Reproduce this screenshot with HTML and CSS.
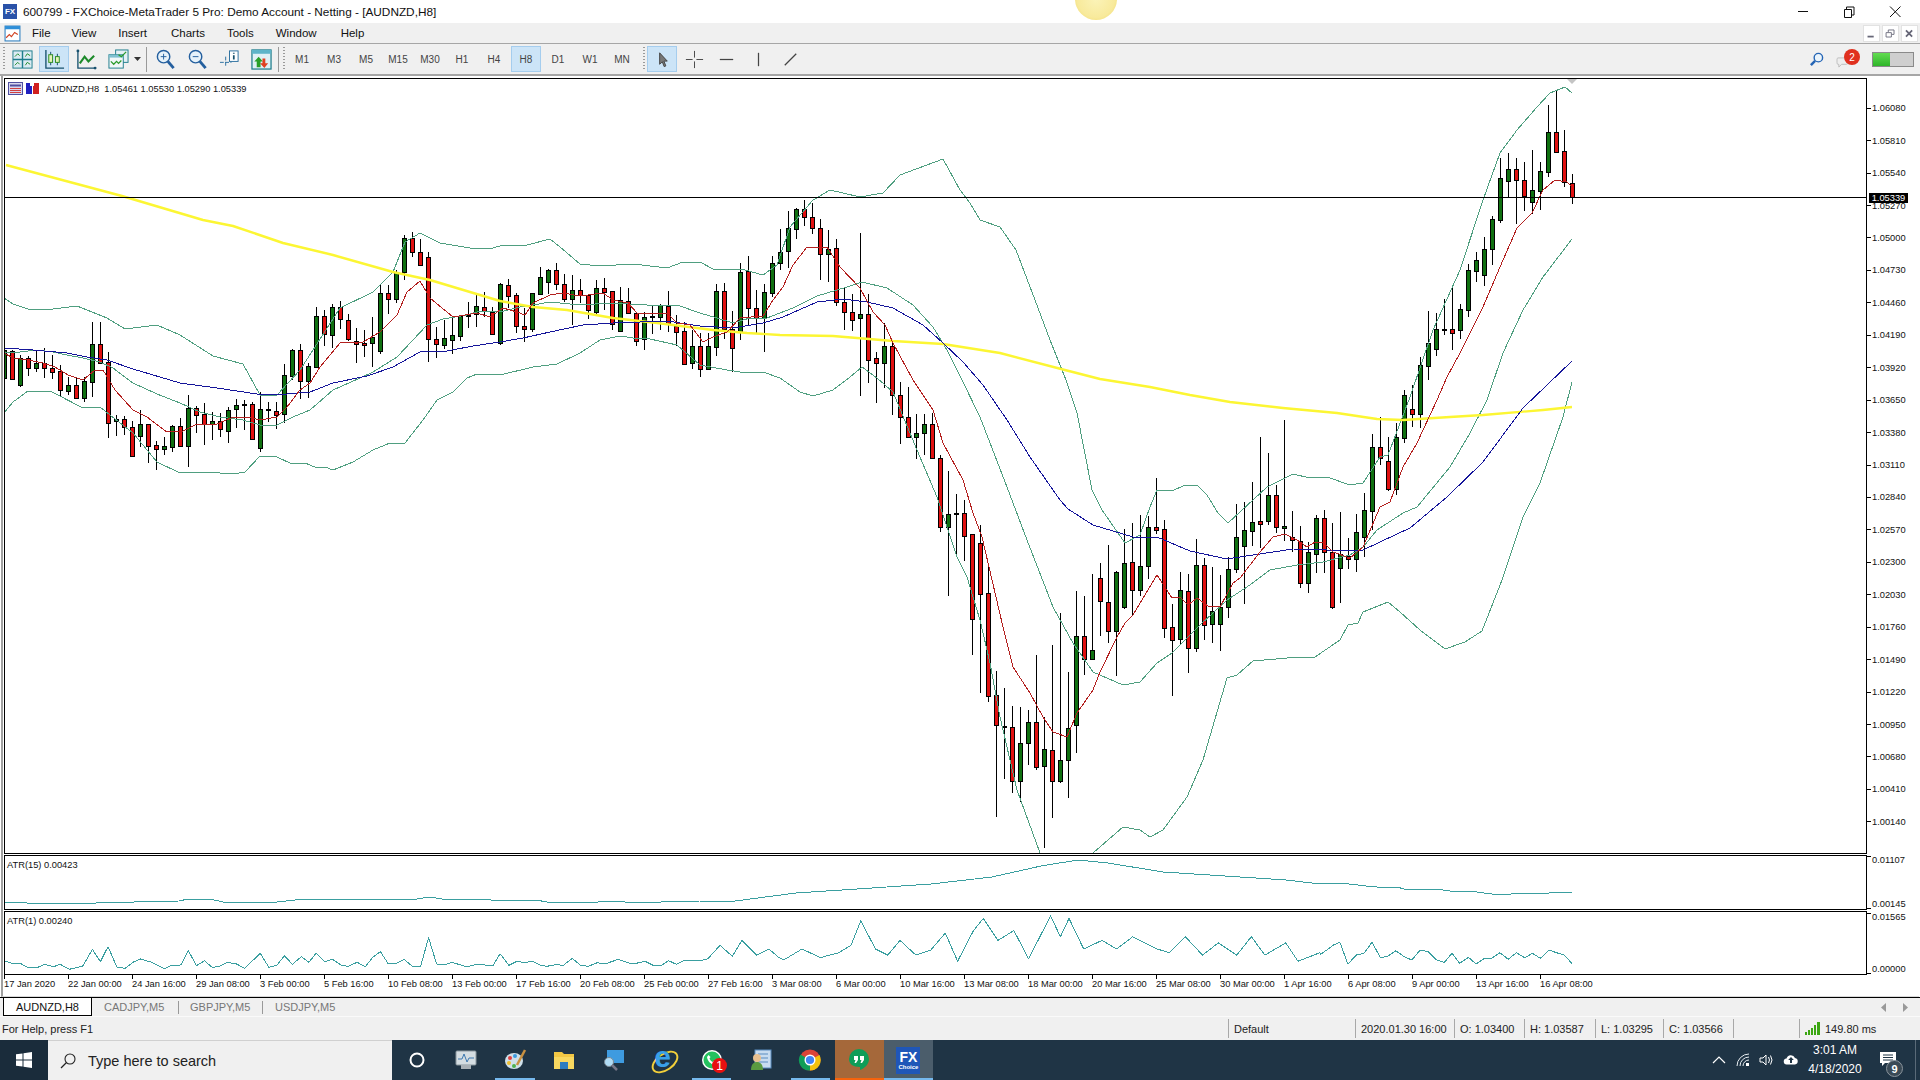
FILE: index.html
```html
<!DOCTYPE html>
<html lang="en">
<head>
<meta charset="utf-8">
<title>FXChoice-MetaTrader 5</title>
<link rel="stylesheet" href="styles.css">
</head>
<body>
<div class="glow"></div>
<div class="app">
  <header class="titlebar">
    <span class="app-badge">FX</span>
    <span class="title-text">600799 - FXChoice-MetaTrader 5 Pro: Demo Account - Netting - [AUDNZD,H8]</span>
    <div class="win-btns">
      <svg class="wb" viewBox="0 0 46 22"><path d="M18 10.5h10" stroke="#111" fill="none"/></svg>
      <svg class="wb" viewBox="0 0 46 22"><path d="M18.5 8.5h7v8h-7zM20.5 8.5v-2.5h7.500v8h-2.500" stroke="#111" fill="none"/></svg>
      <svg class="wb" viewBox="0 0 46 22"><path d="M18 5.500l10.500 10.500M28.500 5.500L18 16" stroke="#111" fill="none"/></svg>
    </div>
  </header>
  <nav class="menubar">
    <svg class="menu-icon" viewBox="0 0 16 16"><rect x="1" y="1" width="14" height="14" fill="#fff" stroke="#2f7fc0"/><rect x="1" y="1" width="14" height="3" fill="#2f8fd8"/><path d="M2 12l3-3 2 2 3-4 3 2" stroke="#d04020" fill="none"/></svg>
    <span class="menu-item">File</span><span class="menu-item m-view">View</span><span class="menu-item">Insert</span><span class="menu-item m-charts">Charts</span><span class="menu-item">Tools</span><span class="menu-item">Window</span><span class="menu-item m-help">Help</span>
    <div class="mdi-btns">
      <span class="mdi"><svg viewBox="0 0 17 17"><path d="M4 12h7" stroke="#667" stroke-width="2"/></svg></span>
      <span class="mdi"><svg viewBox="0 0 17 17"><path d="M3.500 7.500h6v5h-6zM6 7V4.500h6.500v5H10" stroke="#667" fill="none"/></svg></span>
      <span class="mdi"><svg viewBox="0 0 17 17"><path d="M4.500 5l7 7M11.500 5l-7 7" stroke="#667" stroke-width="2"/></svg></span>
    </div>
  </nav>
  <div class="toolbar">
    <i class="grip"></i>
    <span class="tb"><svg viewBox="0 0 22 22"><rect x="1" y="2" width="20" height="18" fill="#dcebf3" stroke="#1e7d8c"/><path d="M11 2v18M1 11h20" stroke="#1e7d8c" stroke-width="1.500"/><path d="M3 8l3-3 2 2M14 8l2-3 3 2M3 17l3-3 2 2M14 17l2-3 3 2" stroke="#1c8a2a" fill="none"/></svg></span>
    <span class="tb on"><svg viewBox="0 0 22 22"><path d="M2 1v19h19" stroke="#17506e" stroke-width="1.400" fill="none"/><path d="M7 3v14M14 5v12" stroke="#17506e"/><rect x="5" y="6" width="4" height="8" fill="#e8f3b8" stroke="#2a8a1e"/><rect x="12" y="8" width="4" height="6" fill="#e8f3b8" stroke="#2a8a1e"/></svg></span>
    <span class="tb"><svg viewBox="0 0 22 22"><path d="M2 1v19h19" stroke="#17506e" stroke-width="1.400" fill="none"/><circle cx="2" cy="2" r="1.500" fill="#17506e"/><circle cx="20" cy="20" r="1.500" fill="#17506e"/><path d="M4 15l5-7 4 5 6-6" stroke="#1c8a2a" stroke-width="2.200" fill="none"/></svg></span>
    <span class="tb"><svg viewBox="0 0 22 22"><rect x="8" y="1" width="13" height="13" fill="#e4f0f5" stroke="#1e7d8c"/><rect x="1" y="6" width="15" height="14" fill="#f2f7f9" stroke="#1e7d8c"/><rect x="1" y="6" width="15" height="3" fill="#7fc0d0"/><path d="M3 13l3 3 3-3 2 2 3-3M11 6l3 2 5-5" stroke="#2a9a2a" fill="none" stroke-width="1.300"/></svg></span>
    <svg class="drop" viewBox="0 0 7 4"><path d="M0 0h7L3.500 4z" fill="#333"/></svg>
    <i class="sep"></i>
    <span class="tb"><svg viewBox="0 0 22 22"><circle cx="9" cy="8" r="6.500" fill="#e6f2fa" stroke="#245f9e" stroke-width="1.500"/><path d="M6 8h6M9 5v6" stroke="#245f9e"/><path d="M13.500 13l6 7" stroke="#245f9e" stroke-width="3"/></svg></span>
    <span class="tb"><svg viewBox="0 0 22 22"><circle cx="9" cy="8" r="6.500" fill="#e6f2fa" stroke="#245f9e" stroke-width="1.500"/><path d="M6 8h6" stroke="#245f9e"/><path d="M13.500 13l6 7" stroke="#245f9e" stroke-width="3"/></svg></span>
    <span class="tb"><svg viewBox="0 0 22 22"><path d="M7 8v11M1 14h12" stroke="#2a6f9e" stroke-dasharray="4 1.500"/><rect x="11" y="2" width="9" height="11" fill="#fff" stroke="#2a6f9e"/><path d="M15.500 4v1M15.500 6.500v4.500" stroke="#17506e" stroke-width="1.800"/></svg></span>
    <span class="tb"><svg viewBox="0 0 22 22"><rect x="1" y="1" width="20" height="20" fill="#dff0f5" stroke="#1e7d8c" stroke-width="1.300"/><rect x="1" y="1" width="20" height="4" fill="#5db4c8"/><path d="M8 8l4.500 5H10v6H6v-6H3.500z" fill="#28a028"/><path d="M15 10v5h3l-4 5-4.500-5H12v-5z" fill="#e04020"/></svg></span>
    <i class="sep sep-near"></i>
    <i class="grip grip-tf"></i>
    <span class="tf">M1</span><span class="tf">M3</span><span class="tf">M5</span><span class="tf">M15</span><span class="tf">M30</span><span class="tf">H1</span><span class="tf">H4</span><span class="tf on">H8</span><span class="tf">D1</span><span class="tf">W1</span><span class="tf">MN</span>
    <i class="grip grip-tools"></i>
    <span class="tb on"><svg viewBox="0 0 22 22"><path d="M8 4v12l2.800-2.500 2 5 1.700-.8-2-5H16z" fill="#777" stroke="#444"/></svg></span>
    <span class="tb"><svg viewBox="0 0 22 22"><path d="M11 2v7M11 13v7M2 11h7M13 11h7" stroke="#444"/></svg></span>
    <span class="tb"><svg viewBox="0 0 22 22"><path d="M4 11h14" stroke="#444" stroke-width="1.300"/></svg></span>
    <span class="tb"><svg viewBox="0 0 22 22"><path d="M11 4v14" stroke="#444" stroke-width="1.300"/></svg></span>
    <span class="tb"><svg viewBox="0 0 22 22"><path d="M5 17L17 5" stroke="#444" stroke-width="1.300"/></svg></span>
    <div class="tool-right">
      <svg class="find" viewBox="0 0 16 16"><circle cx="10" cy="6" r="4.500" fill="#eaf4fb" stroke="#2565b5" stroke-width="1.500"/><path d="M6.500 9.500L2 14" stroke="#2565b5" stroke-width="2.600"/></svg>
      <span class="chat"><svg class="bubble" viewBox="0 0 14 12"><path d="M2 1h9q2 0 2 2v3q0 2-2 2H6l-3 3V8H2Q1 8 1 6V3q0-2 1-2z" fill="#eee" stroke="#bbb"/></svg><b class="chat-badge">2</b></span>
      <span class="meter"><i class="meter-fill"></i></span>
    </div>
  </div>

  <main class="workspace">
    <section class="pane pane-main">
      <div class="plot">
        <svg id="price" class="plot-svg" viewBox="5 79 1861 774"></svg>
        <div class="legend">
          <svg class="legend-ic" viewBox="0 0 32 13"><rect x=".5" y=".5" width="14" height="12" fill="#d8d8f0" stroke="#5050a0"/><path d="M2 3.500h11" stroke="#5050a0" stroke-width="2"/><path d="M2 6.500h11M2 8.500h11M2 10.500h11" stroke="#d04040"/><rect x="18" y="1" width="6" height="11" fill="#2020c0"/><rect x="25" y="1" width="6" height="11" fill="#d02020"/><rect x="22" y="1" width="4" height="3" fill="#fff"/></svg>
          <span>AUDNZD,H8&nbsp;&nbsp;1.05461 1.05530 1.05290 1.05339</span>
        </div>
      </div>
      <div class="axis axis-price">
        <span class="tick">1.06080</span><span class="tick">1.05810</span><span class="tick">1.05540</span><span class="tick">1.05270</span><span class="tick">1.05000</span><span class="tick">1.04730</span><span class="tick">1.04460</span><span class="tick">1.04190</span><span class="tick">1.03920</span><span class="tick">1.03650</span><span class="tick">1.03380</span><span class="tick">1.03110</span><span class="tick">1.02840</span><span class="tick">1.02570</span><span class="tick">1.02300</span><span class="tick">1.02030</span><span class="tick">1.01760</span><span class="tick">1.01490</span><span class="tick">1.01220</span><span class="tick">1.00950</span><span class="tick">1.00680</span><span class="tick">1.00410</span><span class="tick">1.00140</span>
        <span class="last-price">1.05339</span>
      </div>
    </section>
    <section class="pane pane-atr15">
      <div class="plot">
        <svg id="atr15" class="plot-svg" viewBox="5 856 1861 53"></svg>
        <span class="pane-label">ATR(15) 0.00423</span>
      </div>
      <div class="axis axis-sub"><span class="tick t-top">0.01107</span><span class="tick t-bot">0.00145</span></div>
    </section>
    <section class="pane pane-atr1">
      <div class="plot">
        <svg id="atr1" class="plot-svg" viewBox="5 912 1861 62"></svg>
        <span class="pane-label">ATR(1) 0.00240</span>
      </div>
      <div class="axis axis-sub axis-atr1"><span class="tick t-top">0.01565</span><span class="tick t-bot">0.00000</span></div>
    </section>
    <div class="timeaxis">
      <span>17 Jan 2020</span><span>22 Jan 00:00</span><span>24 Jan 16:00</span><span>29 Jan 08:00</span><span>3 Feb 00:00</span><span>5 Feb 16:00</span><span>10 Feb 08:00</span><span>13 Feb 00:00</span><span>17 Feb 16:00</span><span>20 Feb 08:00</span><span>25 Feb 00:00</span><span>27 Feb 16:00</span><span>3 Mar 08:00</span><span>6 Mar 00:00</span><span>10 Mar 16:00</span><span>13 Mar 08:00</span><span>18 Mar 00:00</span><span>20 Mar 16:00</span><span>25 Mar 08:00</span><span>30 Mar 00:00</span><span>1 Apr 16:00</span><span>6 Apr 08:00</span><span>9 Apr 00:00</span><span>13 Apr 16:00</span><span>16 Apr 08:00</span>
    </div>
  </main>

  <div class="tabbar">
    <span class="tab active">AUDNZD,H8</span>
    <span class="tab tab-c">CADJPY,M5</span>
    <span class="tab tab-g">GBPJPY,M5</span>
    <span class="tab tab-u">USDJPY,M5</span>
    <div class="tab-arrows">
      <svg viewBox="0 0 5 9"><path d="M5 0v9L0 4.500z" fill="#999"/></svg>
      <svg viewBox="0 0 5 9"><path d="M0 0v9l5-4.500z" fill="#999"/></svg>
    </div>
  </div>

  <footer class="statusbar">
    <span class="st st-help">For Help, press F1</span>
    <span class="st st-def">Default</span>
    <span class="st st-date">2020.01.30 16:00</span>
    <span class="st st-o">O: 1.03400</span>
    <span class="st st-h">H: 1.03587</span>
    <span class="st st-l">L: 1.03295</span>
    <span class="st st-c">C: 1.03566</span>
    <span class="st st-e"></span>
    <span class="st st-ping"><svg class="signal" viewBox="0 0 15 13"><path d="M0 10h2v3H0zM3 8h2v5H3zM6 6h2v7H6zM9 3h2v10H9zM12 0h3v13h-3z" fill="#3ca612"/></svg>149.80 ms</span>
  </footer>

  <div class="taskbar">
    <span class="start"><svg class="winlogo" viewBox="0 0 16 16"><path d="M0 2.300L6.500 1.400V7.500H0zM7.500 1.200L16 0V7.500H7.500zM0 8.500H6.500V14.600L0 13.700zM7.500 8.500H16V16L7.500 14.800z" fill="#fff"/></svg></span>
    <label class="search"><svg class="search-ic" viewBox="0 0 16 16"><circle cx="10" cy="6" r="5" fill="none" stroke="#222" stroke-width="1.100"/><path d="M6.500 9.500L1 15" stroke="#222" stroke-width="1.200"/></svg><span>Type here to search</span></label>
    <span class="tk"><svg viewBox="0 0 24 24"><circle cx="12" cy="12" r="6.500" fill="none" stroke="#fff" stroke-width="2"/></svg></span>
    <span class="tk"><svg viewBox="0 0 24 24"><rect x="2" y="3" width="20" height="14" rx="1" fill="#d4dde2" stroke="#8a969e"/><path d="M4 11h4l2-5 3 8 2-4h5" stroke="#3c78b0" fill="none"/><rect x="7" y="17" width="10" height="4" fill="#a8b0b6"/></svg></span>
    <span class="tk tk-run"><svg viewBox="0 0 24 24"><ellipse cx="11" cy="13" rx="9" ry="8" fill="#cfe0ea"/><circle cx="7" cy="10" r="2" fill="#e04040"/><circle cx="12" cy="8" r="2" fill="#3c9ae0"/><circle cx="6" cy="15" r="2" fill="#f0c030"/><circle cx="11" cy="18" r="2" fill="#50b050"/><path d="M14 17L22 2" stroke="#c89040" stroke-width="2.500"/></svg></span>
    <span class="tk"><svg viewBox="0 0 24 24"><path d="M2 4h8l2 2h10v15H2z" fill="#f2c744"/><rect x="2" y="9" width="20" height="12" fill="#f8d860"/><rect x="8" y="14" width="8" height="7" fill="#2d7dc0"/></svg></span>
    <span class="tk"><svg viewBox="0 0 24 24"><rect x="6" y="2" width="17" height="13" fill="#3e9be0"/><circle cx="8" cy="14" r="4.500" fill="#b0dcf5" stroke="#7c8a94"/><path d="M11 17l5 5" stroke="#778" stroke-width="2.500"/></svg></span>
    <span class="tk tk-ie"><span class="ie">e</span></span>
    <span class="tk tk-run"><svg viewBox="0 0 24 24"><circle cx="12" cy="12" r="10" fill="#fff"/><circle cx="12" cy="12" r="8.500" fill="#25c15f"/><path d="M8.500 7l-1.500 2c.5 4 3.500 7 7.500 8l2-2-2.500-2-1.500 1c-1.500-1-2.500-2-3-3.500l1-1.500z" fill="#fff"/></svg><b class="wa-badge">1</b></span>
    <span class="tk"><svg viewBox="0 0 24 24"><rect x="6" y="2" width="16" height="18" fill="#c8dcf0" stroke="#5a8cc0"/><path d="M9 6h10M9 10h10M9 14h10" stroke="#5a8cc0"/><circle cx="8" cy="10" r="4" fill="#e8c090"/><path d="M2 22c0-6 3-8 6-8s6 2 6 8z" fill="#5a9a40"/></svg></span>
    <span class="tk tk-run"><svg viewBox="0 0 24 24"><circle cx="12" cy="12" r="10.500" fill="#db4437"/><path d="M12 12L21.500 7A10.500 10.500 0 0 1 12 22.500z" fill="#f4c20d"/><path d="M12 12v10.500A10.500 10.500 0 0 1 2.500 6.500z" fill="#0f9d58"/><circle cx="12" cy="12" r="4.800" fill="#4285f4" stroke="#fff" stroke-width="1.400"/></svg></span>
    <span class="tk tk-hang"><svg viewBox="0 0 24 24"><path d="M12 1a10 10 0 0 1 10 10c0 5-4 9-9 11v-3C6 19 2 16 2 11A10 10 0 0 1 12 1z" fill="#0f9d58"/><path d="M7 8h4v4l-2 3H7.500l1-3H7zM13 8h4v4l-2 3h-1.500l1-3H13z" fill="#fff"/></svg></span>
    <span class="tk tk-fx"><span class="fx-logo"><b>FX</b><small>Choice</small></span></span>
    <div class="tray">
      <span class="tr"><svg viewBox="0 0 16 16"><path d="M2 11l6-6 6 6" stroke="#fff" fill="none" stroke-width="1.200"/></svg></span>
      <span class="tr"><svg viewBox="0 0 16 16"><path d="M2 14A12 12 0 0 1 14 2M5 14a9 9 0 0 1 9-9M8 14a6 6 0 0 1 6-6" stroke="#e8eef2" fill="none"/><rect x="11" y="11" width="3" height="3" fill="#fff"/></svg></span>
      <span class="tr"><svg viewBox="0 0 16 16"><path d="M1 6h3l3-3v10l-3-3H1zM9.500 5q2 3 0 6M11.500 3.500q3 4.500 0 9" stroke="#fff" fill="none"/></svg></span>
      <span class="tr"><svg viewBox="0 0 16 16"><path d="M4 12.500a3 3 0 0 1-.500-6 4.500 4.500 0 0 1 8.500-.500 3.300 3.300 0 0 1 0 6.500z" fill="#fff"/><path d="M8 5l-2.800 3H7v3h2V8h1.800z" fill="#1f3445"/></svg></span>
      <span class="clock"><span>3:01 AM</span><span>4/18/2020</span></span>
      <span class="note"><svg viewBox="0 0 16 16"><path d="M0 0h16v11H5l-3 3v-3H0z" fill="#fff"/><path d="M3 3h10M3 5.500h10M3 8h10" stroke="#1f3445"/></svg><b class="note-badge">9</b></span>
      <i class="show-desk"></i>
    </div>
  </div>
</div>
<script src="chart.js"></script>
</body>
</html>
```
FILE: styles.css
```css
* { box-sizing: border-box; }
html, body { margin: 0; padding: 0; }
body {
  width: 1920px; height: 1080px; overflow: hidden; background: #fff; color: #111;
  font-family: "Liberation Sans", Arial, sans-serif; font-size: 11.500px; position: relative;
}
svg { display: block; }
.glow {
  position: absolute; left: 1075px; top: -22px; width: 42px; height: 42px; border-radius: 50%; z-index: 5;
  background: radial-gradient(circle, #fbf3b8 0%, #f8ea9c 62%, #f3e07f 80%, #fdf7d5 100%);
}
.app { display: flex; flex-direction: column; width: 1920px; height: 1080px; }

/* title + menu */
.titlebar { height: 23px; display: flex; align-items: center; background: #fff; padding-left: 3px; }
.app-badge {
  width: 14px; height: 15px; background: #2a52a8; color: #fff; font: bold 8px "Liberation Sans", sans-serif;
  display: flex; align-items: center; justify-content: center; margin-right: 6px;
}
.title-text { font-size: 11.800px; }
.win-btns { margin-left: auto; display: flex; margin-right: 2px; height: 22px; }
.wb { width: 46px; height: 22px; }
.menubar {
  height: 21px; background: #f0f0f0; border-bottom: 1px solid #a6a6a6; display: flex; align-items: center; gap: 22px;
  padding-left: 32px; position: relative; font-size: 11.500px;
}
.m-view { margin-left: -1px; }
.m-charts { margin-left: 2px; }
.m-help { margin-left: 2px; }
.menu-icon { position: absolute; left: 4px; top: 2px; width: 17px; height: 17px; }
.mdi-btns { margin-left: auto; display: flex; gap: 2px; padding: 2px 2px 0 0; height: 20px; }
.mdi { width: 17px; height: 17px; background: #fff; border: 1px solid #e2e2e2; }
.mdi svg { width: 15px; height: 15px; }

/* toolbar */
.toolbar {
  height: 32px; background: #f0f0f0; border-bottom: 2px solid #a6a6a6; display: flex; align-items: center; padding-left: 2px;
  font-size: 10px; color: #444;
}
.grip {
  width: 4px; height: 24px; flex: none;
  background: repeating-linear-gradient(to bottom, #9a9a9a 0 1px, transparent 1px 3px);
  background-size: 2px 100%; background-repeat: no-repeat; background-position: center;
}
.grip-tf { margin-left: 1px; }
.grip-tools { margin-left: 4px; }
.tb {
  width: 30px; height: 26px; margin: 0 1px; border: 1px solid transparent; display: flex; align-items: center; justify-content: center; flex: none;
}
.tb svg { width: 21px; height: 21px; }
.tb.on, .tf.on { background: #cce4f7; border-color: #a5cdee; }
.drop { width: 7px; height: 4px; margin: 0; flex: none; }
.sep { width: 1px; height: 25px; background: #9a9a9a; margin: 0 2px 0 5px; flex: none; }
.sep-near { margin: 0 2px 0 1px; }
.tf {
  width: 30px; height: 26px; margin: 0 1px; border: 1px solid transparent; display: flex; align-items: center; justify-content: center; flex: none;
}
.tool-right { margin-left: auto; display: flex; align-items: center; padding-right: 6px; }
.find { width: 15px; height: 15px; margin-right: 12px; }
.chat { position: relative; width: 26px; height: 20px; margin-right: 10px; }
.bubble { position: absolute; left: 0; top: 8px; width: 13px; height: 11px; }
.chat-badge {
  position: absolute; left: 8px; top: 0; width: 16px; height: 16px; border-radius: 50%; background: #e0301e; color: #fff;
  font-size: 10px; font-weight: normal; display: flex; align-items: center; justify-content: center;
}
.meter { width: 42px; height: 15px; background: #cfcfcf; border: 1px solid #8a8a8a; display: block; }
.meter-fill { display: block; width: 17px; height: 100%; background: linear-gradient(to bottom, #62dc50, #2fb52a); }

/* charts */
.workspace { height: 921px; padding: 2px 0 1px 1px; margin-left: 1px; border-left: 2px solid #a0a0a0; border-bottom: 1px solid #d8d8d8; background: #fff; display: flex; flex-direction: column; width: 1918px; }
.pane { display: flex; flex: none; }
.pane + .pane { margin-top: 1px; }
.pane-main { height: 776px; }
.pane-atr15 { height: 55px; }
.pane-atr1 { height: 64px; }
.plot { border: 1px solid #000; width: 1863px; position: relative; flex: none; background: #fff; overflow: hidden; }
.plot-svg { width: 1861px; height: 100%; }
.ln { fill: none; stroke-width: 1; stroke-linejoin: round; shape-rendering: crispEdges; }
.ln-band { stroke: #4f9f80; }
.ln-red { stroke: #b3201f; }
.ln-blue { stroke: #15159a; }
.ln-yellow { stroke: #fcf633; stroke-width: 2.400; shape-rendering: auto; }
.ln-atr { stroke: #3a9fa0; }
.price-line { stroke: #000; stroke-width: 1; }
.c-wick { stroke: #000; stroke-width: 1; shape-rendering: crispEdges; }
.c-g { fill: #0f7010; stroke: #000; stroke-width: 1; shape-rendering: crispEdges; }
.c-r { fill: #e01010; stroke: #000; stroke-width: 1; shape-rendering: crispEdges; }
.mark { fill: #c4c4c4; }
.legend { position: absolute; left: 3px; top: 3px; display: flex; align-items: center; gap: 6px; font-size: 9.300px; }
.legend-ic { width: 32px; height: 13px; }
.pane-label { position: absolute; left: 2px; top: 4px; font-size: 9.300px; }
.axis { font-size: 9.300px; flex: 1; position: relative; display: flex; flex-direction: column; color: #111; }
.axis-price { padding-top: 14px; }
.axis-price .tick { height: 32.450px; }
.tick { display: flex; align-items: center; gap: 1px; line-height: 10px; }
.tick::before { content: ""; width: 4px; height: 1px; background: #000; flex: none; }
.axis-sub { justify-content: space-between; padding-bottom: 1px; }
.axis-sub .t-top::before { align-self: flex-start; margin-top: 1px; }
.axis-sub .t-bot::before { align-self: flex-end; }
.axis-atr1 { padding-top: 1px; padding-bottom: 1px; }
.last-price { position: absolute; left: 2px; top: 115px; width: 39px; height: 10px; background: #000; color: #fff; line-height: 10px; text-align: center; }

/* time axis */
.timeaxis { display: flex; height: 20px; flex: none; font-size: 9.300px; line-height: 17px; padding-top: 1px; }
.timeaxis span { width: 64px; flex: none; position: relative; white-space: nowrap; }
.timeaxis span::before { content: ""; position: absolute; left: 0; top: -1px; width: 1px; height: 4px; background: #000; }

/* tabs */
.tabbar { height: 20px; background: #f0f0f0; border-top: 1px solid #000; border-bottom: 1px solid #fafafa; display: flex; align-items: stretch; color: #777; font-size: 11px; position: relative; }
.tab { display: flex; align-items: center; flex: none; }
.tab.active { margin-left: 3px; width: 89px; background: #fff; color: #111; border: 1px solid #000; border-top: none; justify-content: center; }
.tab-c { margin-left: 12px; width: 74px; }
.tab-g { margin-left: 12px; width: 72px; }
.tab-u { margin-left: 13px; }
.tab-c::after, .tab-g::after { content: ""; position: absolute; width: 1px; height: 13px; background: #999; top: 3px; }
.tab-c::after { left: 178px; }
.tab-g::after { left: 262px; }
.tab-arrows { margin-left: auto; display: flex; gap: 17px; align-items: center; padding-right: 12px; }
.tab-arrows svg { width: 5px; height: 9px; }

/* status */
.statusbar { height: 23px; background: #f0f0f0; display: flex; align-items: center; font-size: 11px; color: #222; flex: none; }
.st { height: 19px; display: flex; align-items: center; padding-left: 5px; border-left: 1px solid #a8a8a8; flex: none; white-space: nowrap; }
.st-help { width: 1228px; border-left: none; padding-left: 2px; }
.st-def { width: 127px; }
.st-date { width: 99px; }
.st-o { width: 70px; }
.st-h { width: 71px; }
.st-l { width: 68px; }
.st-c { width: 70px; }
.st-e { width: 66px; }
.st-ping { width: 121px; }
.signal { width: 15px; height: 13px; margin-right: 5px; }

/* taskbar */
.taskbar { height: 40px; background: #1f3445; display: flex; align-items: stretch; flex: none; color: #fff; }
.start { width: 48px; background: #1a2c3b; display: flex; align-items: center; justify-content: center; flex: none; }
.winlogo { width: 16px; height: 16px; }
.search { width: 344px; background: #f0f0f0; color: #222; display: flex; align-items: center; font-size: 14.500px; border-top: 1px solid #d0d0d0; flex: none; }
.search-ic { width: 16px; height: 16px; margin: 0 12px; }
.tk { width: 49.200px; display: flex; align-items: center; justify-content: center; position: relative; flex: none; }
.tk > svg { width: 24px; height: 24px; }
.tk-run::after, .tk-hang::after, .tk-fx::after { content: ""; position: absolute; left: 5px; right: 5px; bottom: 0; height: 2px; background: #76b9ed; }
.tk-hang { background: #a5683a; }
.tk-hang::after { left: 0; right: 0; background: #f7630c; }
.tk-fx { background: #4b5d6b; }
.tk-fx::after { left: 0; right: 0; }
.ie { font: bold 30px "Liberation Sans", sans-serif; color: #3aa0e8; line-height: 24px; position: relative; margin-top: -6px; }
.tk-ie::before {
  content: ""; position: absolute; left: 12px; top: 13px; width: 26px; height: 14px; border: 2px solid #f2cf3a; border-radius: 50%; transform: rotate(-35deg);
}
.wa-badge { position: absolute; left: 25px; top: 18px; width: 15px; height: 15px; border-radius: 50%; background: #e81010; font-size: 12px; font-weight: normal; display: flex; align-items: center; justify-content: center; }
.fx-logo { width: 24px; height: 27px; background: #1f56b8; display: flex; flex-direction: column; align-items: center; justify-content: center; line-height: 1; }
.fx-logo b { font-size: 14px; }
.fx-logo small { font-size: 6px; font-weight: bold; }
.tray { margin-left: auto; display: flex; align-items: center; }
.tr { width: 24px; display: flex; justify-content: center; }
.tr svg { width: 16px; height: 16px; }
.clock { width: 64px; display: flex; flex-direction: column; align-items: center; font-size: 12px; line-height: 19px; }
.note { width: 47px; position: relative; height: 40px; }
.note svg { position: absolute; left: 13px; top: 12px; width: 16px; height: 16px; }
.note-badge { position: absolute; left: 19px; top: 20px; width: 17px; height: 17px; border-radius: 50%; background: #3a4a56; border: 1px solid #8a949c; font-size: 11px; display: flex; align-items: center; justify-content: center; }
.show-desk { width: 1px; height: 40px; background: #5a6a78; margin: 0 4px 0 1px; }
```
FILE: chart.js
```js
// candles: [wickTop, bodyTop, bodyBottom, wickBottom, green?] in crop units (y = oy + v/3)
var segs = [
 [220, [[390,390,475,475,1],[390,392,478,480,0],[405,415,495,500,1],[408,415,443,468,0],[392,430,443,455,1],[385,430,445,475,0],[405,444,456,476,0],[435,453,510,530,0],[470,495,512,525,1],[475,495,533,535,0],[470,483,533,545,1],[305,372,485,530,1],[305,372,428,430,0],[395,427,608,653,0],[585,598,604,647,1],[588,598,622,645,0],[603,622,708,710,0],[570,612,647,682,1],[612,612,678,728,0],[663,676,686,750,0],[652,679,686,705,1],[615,618,680,695,1],[595,618,677,677,0],[525,564,677,740,1],[558,565,584,638,0],[550,583,612,675,0],[575,604,612,660,1],[578,604,628,650,0],[560,570,632,668,1],[537,556,568,623,1],[540,553,556,630,1],[545,552,656,658,0],[515,568,685,697,1],[545,568,571,605,1],[545,572,584,628,0],[432,465,583,608,1],[388,390,467,480,1],[372,390,482,537,0],[430,438,482,535,1],[262,288,440,445,1],[270,288,343,378,0],[252,262,344,383,1],[243,262,298,326,0],[282,300,356,362,0],[325,363,373,428,0],[330,370,374,410,0],[290,352,370,440,1],[195,220,392,402,1],[195,220,238,282,0],[150,155,238,250,1],[45,55,155,180,1],[35,55,97,110,0],[57,97,134,135,0],[95,112,358,425,0],[320,358,373,415,0],[300,354,374,388,1],[292,346,361,402,1],[285,287,347,363,1],[247,284,288,325,1],[225,258,283,320,1],[217,260,272,292,0],[260,277,343,345,0],[190,192,370,375,1],[178,194,227,265,0],[218,226,318,340,0]]],
 [190, [[355,408,418,455,0],[310,310,418,425,1],[232,262,312,315,1],[238,240,275,312,1],[220,240,283,300,0],[252,283,326,335,0],[255,301,326,405,1],[268,301,316,340,0],[312,316,359,387,0],[270,295,365,372,1],[265,295,305,360,0],[304,304,402,420,0],[292,331,423,425,1],[295,332,370,372,0],[365,370,452,468,0],[365,382,446,480,1],[345,379,382,432,1],[342,345,380,420,1],[303,348,400,425,0],[375,408,425,467,0],[396,424,523,523,0],[420,468,520,537,1],[430,468,536,560,0],[430,468,537,540,1],[282,304,470,498,1],[280,304,418,447,0],[363,418,473,545,0],[220,245,425,450,1],[198,244,355,405,0],[300,354,383,428,0],[282,307,383,485,1],[198,218,308,322,1],[117,187,218,240,1],[62,115,182,233,1],[55,58,116,147,1],[30,58,80,107,0],[40,82,115,132,0],[87,115,193,270,0],[120,176,193,275,1],[148,175,337,347,0],[292,337,365,420,0],[312,365,389,423,0],[130,373,383,618,1],[312,373,509,578,0],[487,505,520,640,0],[398,468,520,595,1],[455,468,616,675,0],[575,616,680,762,0],[590,682,740,742,0],[672,730,740,808,1],[672,703,730,795,1],[668,703,805,808,0]]],
 [380, [[225,235,440,455,0],[272,402,440,648,1],[342,400,403,532,1],[360,400,467,542,0],[463,463,716,825,0],[435,490,641,938,0],[550,640,947,965,0],[873,946,1036,1310,0],[925,1037,1040,1197,1],[978,1040,1204,1238,0],[980,1090,1202,1265,1],[990,1027,1090,1155,1],[825,1027,1160,1170,0],[1010,1108,1157,1403,1],[795,1111,1204,1313,0],[700,1141,1204,1208,1],[877,1045,1141,1253,1],[633,769,1036,1118,1],[648,769,838,885,0],[582,811,838,838,1],[548,595,664,768,0],[495,667,752,788,0],[573,577,752,887,1],[447,550,680,688,1],[430,547,631,705,0],[405,559,631,647,1],[408,442,559,597,1]]],
 [80, [[1195,1342,1350,1362,0]]],
 [500, [[60,88,383,413,0],[312,382,419,587,0],[215,270,418,432,1],[222,274,443,518,0],[118,196,443,455,1],[175,196,375,420,0],[200,334,373,428,1],[225,320,371,452,1],[170,208,320,353,1],[12,110,208,218,1],[5,91,138,312,1]]],
 [80, [[1205,1327,1352,1398,1],[1070,1322,1331,1405,0],[1118,1246,1322,1335,1],[1215,1246,1340,1360,0],[1020,1339,1343,1382,1],[1292,1372,1379,1415,0]]],
 [500, [[78,122,248,265,0],[125,157,250,278,1],[45,55,163,220,1],[30,55,157,218,0],[70,157,322,328,0],[37,163,205,310,1],[115,167,178,207,0]]],
 [80, [[1302,1355,1438,1475,1],[1240,1291,1372,1432,1],[1063,1102,1292,1350,1],[1012,1102,1135,1155,0],[1072,1144,1227,1232,0],[1030,1072,1226,1245,1],[930,946,1074,1088,1],[915,988,1002,1040,0],[830,856,1002,1045,1],[693,790,857,900,1],[700,747,806,827,1],[658,747,749,765,1],[625,748,758,810,0],[672,688,749,777,1],[552,570,689,710,1],[516,540,572,605,1],[472,508,585,618,1],[408,418,508,555,1],[235,295,419,428,1],[218,268,302,352,1],[233,268,301,432,0],[245,301,347,392,0],[210,331,365,402,1],[245,274,332,390,1],[75,157,275,292,1],[33,157,215,220,0],[150,214,307,320,0],[283,308,352,372,0]]]
];

var lines = {
 band: [
  [[4,298],[13,304],[28,309],[53,309],[77,306],[107,318],[125,329],[157,325],[180,335],[213,356],[243,364],[260,395],[277,395],[300,370],[313,350],[340,308],[373,292],[393,272],[405,242],[420,233],[440,243],[470,248],[493,248],[503,245],[527,245],[550,239],[560,247],[580,264],[600,266],[633,264],[667,268],[683,262],[700,262],[713,269],[745,270],[763,275],[777,265],[790,227],[813,200],[830,190],[860,197],[883,193],[900,175],[943,159],[960,190],[970,203],[980,220],[1000,227],[1016,250],[1035,300],[1050,340],[1066,380],[1077,413],[1092,490],[1102,510],[1125,543],[1140,535],[1150,507],[1157,490],[1172,491],[1183,486],[1197,485],[1207,495],[1218,513],[1228,523],[1267,487],[1293,474],[1310,478],[1327,477],[1350,485],[1363,483],[1380,457],[1388,455],[1410,397],[1433,330],[1460,270],[1483,200],[1500,153],[1517,130],[1537,107],[1550,93],[1565,87],[1572,93]],
  [[4,353],[20,352],[37,350],[53,352],[67,355],[83,358],[100,362],[113,368],[133,383],[157,394],[180,403],[200,412],[220,417],[243,420],[260,425],[277,425],[293,417],[310,410],[333,390],[360,378],[373,372],[397,357],[427,325],[443,319],[467,315],[480,311],[500,312],[520,307],[533,305],[550,302],[580,305],[610,303],[647,305],[677,305],[700,313],[717,318],[733,323],[750,318],[767,318],[793,308],[817,296],[847,287],[862,282],[887,288],[913,305],[933,327],[947,350],[962,380],[980,417],[1007,487],[1027,540],[1053,607],[1073,643],[1093,672],[1123,685],[1140,682],[1157,663],[1172,653],[1200,625],[1227,600],[1247,587],[1270,570],[1297,565],[1323,562],[1350,555],[1363,547],[1377,530],[1403,513],[1417,507],[1450,467],[1470,433],[1487,400],[1503,353],[1523,310],[1543,277],[1572,239]],
  [[4,413],[13,402],[28,391],[52,392],[83,408],[100,407],[110,415],[133,433],[157,462],[180,473],[207,472],[233,474],[245,472],[260,456],[277,457],[292,464],[305,463],[317,468],[325,467],[333,470],[353,462],[373,450],[390,443],[405,443],[423,420],[437,400],[453,392],[467,378],[477,374],[500,375],[533,367],[557,364],[580,353],[600,340],[620,336],[633,338],[650,339],[677,345],[700,365],[727,370],[740,372],[763,372],[780,378],[800,392],[813,396],[833,390],[850,377],[862,367],[877,378],[893,392],[917,450],[937,497],[957,557],[967,577],[980,620],[990,663],[1000,717],[1017,790],[1040,853],[1093,853],[1123,827],[1140,830],[1150,837],[1163,830],[1187,797],[1203,760],[1227,678],[1237,675],[1253,661],[1287,658],[1315,657],[1340,640],[1348,625],[1358,623],[1363,612],[1388,602],[1400,612],[1420,630],[1445,649],[1465,642],[1482,631],[1502,580],[1523,517],[1540,483],[1563,417],[1572,382]]
 ],
 red: [[[4,353],[13,358],[28,360],[43,363],[55,367],[68,375],[83,380],[95,370],[103,370],[115,390],[133,410],[147,417],[167,432],[183,431],[197,424],[217,424],[233,417],[247,417],[260,420],[277,417],[287,407],[300,390],[310,383],[320,367],[340,343],[363,342],[380,332],[397,315],[407,292],[420,281],[430,298],[453,317],[477,313],[490,317],[503,308],[517,312],[525,315],[533,303],[550,295],[563,293],[580,296],[603,293],[613,300],[628,303],[637,313],[667,313],[677,323],[690,325],[703,342],[713,337],[727,332],[740,318],[763,316],[773,300],[783,287],[793,265],[807,247],[827,247],[840,267],[860,288],[873,312],[885,325],[893,343],[913,380],[933,410],[943,443],[963,480],[973,513],[982,537],[1003,627],[1013,667],[1030,693],[1043,717],[1053,732],[1067,737],[1077,713],[1093,690],[1100,672],[1117,637],[1125,623],[1133,615],[1157,575],[1172,598],[1180,597],[1188,605],[1197,598],[1208,606],[1220,607],[1233,583],[1240,578],[1260,552],[1273,537],[1285,534],[1297,540],[1307,547],[1315,542],[1323,542],[1333,552],[1350,558],[1363,547],[1380,507],[1390,502],[1403,467],[1417,443],[1437,400],[1447,377],[1460,353],[1483,307],[1500,267],[1517,228],[1532,213],[1543,190],[1555,180],[1567,182],[1572,187]]],
 blue: [[[4,348],[33,350],[67,353],[87,357],[107,360],[133,369],[180,383],[217,388],[257,394],[287,394],[310,392],[333,383],[367,376],[393,367],[420,352],[447,351],[473,346],[500,342],[523,338],[550,332],[583,325],[613,323],[667,321],[700,326],[733,328],[763,323],[783,317],[817,302],[843,299],[867,302],[893,308],[923,325],[943,343],[963,362],[983,385],[1007,420],[1030,457],[1060,500],[1068,509],[1093,525],[1133,537],[1157,537],[1190,551],[1227,559],[1253,555],[1293,549],[1327,550],[1363,550],[1380,542],[1410,528],[1447,497],[1483,462],[1523,408],[1572,361]]],
 yellow: [[[6,165],[122,196],[203,220],[233,226],[283,243],[333,255],[393,272],[430,280],[500,301],[533,307],[567,310],[613,318],[657,323],[713,330],[747,333],[780,335],[833,336],[893,341],[943,344],[1000,353],[1065,370],[1100,379],[1150,387],[1190,395],[1230,402],[1283,408],[1337,413],[1377,419],[1403,420],[1450,417],[1483,415],[1543,410],[1572,407]]]
};

var atr15 = [[5,902],[27,903],[71,903],[85,904],[107,902],[134,902],[179,901],[188,899],[210,899],[223,902],[277,902],[295,900],[326,899],[379,899],[411,900],[429,897],[442,899],[487,899],[491,900],[536,900],[547,902],[598,902],[612,901],[625,902],[661,902],[700,901],[735,901],[796,893],[857,889],[931,884],[992,877],[1041,866],[1078,860],[1108,863],[1163,872],[1225,876],[1286,880],[1320,884],[1339,883],[1358,885],[1366,886],[1377,887],[1397,887],[1404,889],[1435,889],[1458,892],[1469,891],[1492,894],[1511,894],[1530,893],[1542,894],[1557,892],[1572,893]];

var a1z = [[10,362],[30,372],[45,370],[65,384],[85,382],[100,373],[120,380],[135,373],[155,388],[185,379],[207,328],[225,365],[242,320],[262,382],[280,385],[300,365],[315,357],[340,367],[368,386],[385,376],[405,375],[422,332],[440,377],[458,362],[475,382],[490,380],[510,367],[530,372],[548,385],[583,340],[602,382],[620,376],[637,347],[655,373],[675,350],[692,367],[708,340],[728,365],[745,358],[765,376],[780,379],[800,367],[818,380],[835,352],[852,335],[870,372],[888,370],[905,358],[925,380],[942,380],[960,293],[978,372],[995,375],[1012,367],[1045,380],[1065,374],[1105,376],[1120,341],[1140,376],[1158,364],[1175,368],[1192,364],[1210,375],[1225,379],[1245,374],[1262,376],[1282,355],[1300,376],[1318,379],[1338,368],[1355,372],[1385,358],[1410,370],[1425,370],[1445,364],[1465,377],[1480,377],[1498,362],[1515,373],[1532,362],[1568,362]];
var a1d = [[578,783],[588,772],[598,781],[606,768],[618,780],[628,775],[636,782],[640,784],[655,775],[670,782],[685,778],[695,772],[703,752],[715,775],[725,780],[735,768],[748,780],[760,776],[772,762],[782,785],[795,760],[803,750],[815,768],[828,760],[840,783],[858,748],[866,765],[873,750],[885,775],[900,768],[912,775],[925,765],[945,775],[955,778],[968,765],[982,780],[995,770],[1010,780],[1022,765],[1033,780],[1050,770],[1060,785],[1078,778]];
var a1r = [[0,345],[35,315],[52,307],[73,372],[95,345],[115,340],[136,307],[158,353],[178,348],[198,332],[220,350],[240,360],[262,330],[283,335],[305,360],[325,367],[345,340],[365,370],[388,352],[408,372],[430,355],[450,354],[470,338],[492,358],[513,338],[535,353],[555,340],[576,355],[598,330],[618,338],[638,345],[658,370]];
var atr1 = a1z.map(function (p) { return [p[0] / 2.24, 840 + p[1] / 3]; })
  .concat(a1d.map(function (p) { return [p[0] * 1.2245, p[1] * 1.2245]; }))
  .concat(a1r.map(function (p) { return [1320 + p[0] / 2.613, 840 + p[1] / 3]; }));

var NS = "http://www.w3.org/2000/svg";
function el(parent, name, attrs) {
  var e = document.createElementNS(NS, name);
  for (var a in attrs) e.setAttribute(a, attrs[a]);
  parent.appendChild(e);
  return e;
}
function poly(parent, pts, cls) {
  el(parent, "polyline", { "class": "ln " + cls, points: pts.map(function (p) { return p[0].toFixed(1) + "," + p[1].toFixed(1); }).join(" ") });
}

var price = document.getElementById("price");
var k = 0;
segs.forEach(function (seg) {
  var oy = seg[0];
  seg[1].forEach(function (c) {
    var x = 4.5 + 8 * k, Y = function (v) { return Math.round(oy + v / 3); };
    el(price, "line", { "class": "c-wick", x1: x, x2: x, y1: Y(c[0]), y2: Y(c[3]) });
    var top = Y(c[1]), bot = Math.max(Y(c[2]), top + 1);
    el(price, "rect", { "class": c[4] ? "c-g" : "c-r", x: x - 2, y: top + 0.5, width: 4, height: bot - top });
    k++;
  });
});
lines.band.forEach(function (p) { poly(price, p, "ln-band"); });
poly(price, lines.yellow[0], "ln-yellow");
poly(price, lines.blue[0], "ln-blue");
poly(price, lines.red[0], "ln-red");
el(price, "line", { "class": "price-line", x1: 5, x2: 1866, y1: 197.5, y2: 197.5 });
el(price, "polygon", { "class": "mark", points: "1567,79 1577,79 1572,84" });
poly(document.getElementById("atr15"), atr15, "ln-atr");
poly(document.getElementById("atr1"), atr1, "ln-atr");
```
